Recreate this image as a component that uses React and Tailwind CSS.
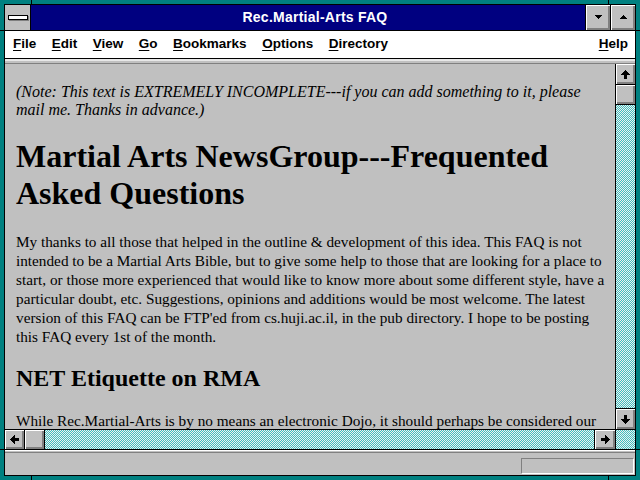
const raised = 'bg-[#c0c0c0] shadow-[inset_1px_1px_0_#fff,inset_-2px_-2px_0_#808080]'

// 1px checkerboard used by the Win 3.1 scrollbar tracks
function Dither({ id, className = '' }) {
  return (
    <div className={`overflow-hidden ${className}`}>
      <svg width="100%" height="100%" shapeRendering="crispEdges">
        <defs>
          <pattern id={id} width="2" height="2" patternUnits="userSpaceOnUse">
            <rect width="2" height="2" fill="#f0f0f0" />
            <rect width="1" height="1" fill="#3fbfbf" />
            <rect x="1" y="1" width="1" height="1" fill="#3fbfbf" />
          </pattern>
        </defs>
        <rect width="100%" height="100%" fill={`url(#${id})`} />
      </svg>
    </div>
  )
}

function Arrow({ dir }) {
  const rot = { up: 0, right: 90, down: 180, left: 270 }[dir]
  return (
    <svg width="11" height="11" viewBox="0 0 11 11" shapeRendering="crispEdges" style={{ transform: `rotate(${rot}deg)` }}>
      <polygon points="5.5,1 10,6 7,6 7,10 4,10 4,6 1,6" fill="#000" />
    </svg>
  )
}

function Tri({ up }) {
  return (
    <svg width="8" height="5" viewBox="0 0 8 5" shapeRendering="crispEdges">
      <polygon points={up ? '4,0 8,4 0,4' : '0,0 8,0 4,4'} fill="#000" />
    </svg>
  )
}

function MenuItem({ first, rest }) {
  return (
    <span>
      <span className="underline underline-offset-2">{first}</span>
      {rest}
    </span>
  )
}

const para = [
  'My thanks to all those that helped in the outline & development of this idea. This FAQ is not',
  'intended to be a Martial Arts Bible, but to give some help to those that are looking for a place to',
  'start, or those more experienced that would like to know more about some different style, have a',
  'particular doubt, etc. Suggestions, opinions and additions would be most welcome. The latest',
  "version of this FAQ can be FTP'ed from cs.huji.ac.il, in the pub directory. I hope to be posting",
  'this FAQ every 1st of the month.',
]

export default function App() {
  return (
    <div className="relative w-[640px] h-[480px] bg-[#008080] p-[4px] font-['Liberation_Sans',Arial,sans-serif]">
      {/* frame corner ticks */}
      <div className="absolute left-[31px] top-0 w-px h-[4px] bg-black" />
      <div className="absolute left-[608px] top-0 w-px h-[4px] bg-black" />
      <div className="absolute left-[31px] bottom-0 w-px h-[4px] bg-black" />
      <div className="absolute left-[608px] bottom-0 w-px h-[4px] bg-black" />
      <div className="absolute left-0 top-[30px] w-[4px] h-px bg-black" />
      <div className="absolute right-0 top-[30px] w-[4px] h-px bg-black" />
      <div className="absolute left-0 top-[449px] w-[4px] h-px bg-black" />
      <div className="absolute right-0 top-[449px] w-[4px] h-px bg-black" />

      <div className="h-full border border-black flex flex-col bg-[#c0c0c0]">
        {/* title bar */}
        <div className="h-[26px] flex border-b border-black shrink-0">
          <div className="w-[26px] border-r border-black bg-[#c0c0c0] flex items-center justify-center">
            <div className="w-[20px] h-[5px] border border-black bg-white shadow-[1px_1px_0_#808080]" />
          </div>
          <div className="flex-1 bg-[#000080] text-white font-bold text-[14px] tracking-[0.25px] flex items-center justify-center pl-[14px]">
            Rec.Martial-Arts FAQ
          </div>
          <div className={`w-[25px] border-l border-black flex items-center justify-center ${raised}`}>
            <Tri />
          </div>
          <div className={`w-[25px] border-l border-black flex items-center justify-center ${raised}`}>
            <Tri up />
          </div>
        </div>

        {/* menu bar */}
        <div className="h-[28px] bg-white border-b border-black flex items-center pl-[8px] pr-[7px] text-[13.5px] font-bold text-black shrink-0">
          <div className="flex gap-[15.5px]">
            <MenuItem first="F" rest="ile" />
            <MenuItem first="E" rest="dit" />
            <MenuItem first="V" rest="iew" />
            <MenuItem first="G" rest="o" />
            <MenuItem first="B" rest="ookmarks" />
            <MenuItem first="O" rest="ptions" />
            <MenuItem first="D" rest="irectory" />
          </div>
          <div className="ml-auto">
            <MenuItem first="H" rest="elp" />
          </div>
        </div>

        {/* toolbar strip */}
        <div className="h-[5px] shrink-0 border-t-2 border-t-[#e8e8e8] border-b border-b-[#808080]" />

        {/* document + vertical scrollbar */}
        <div className="flex-1 flex min-h-0">
          <div className="flex-1 overflow-hidden pl-[11px] pt-[19px] text-black font-['Liberation_Serif','Times_New_Roman',serif] whitespace-nowrap">
            <p className="italic text-[16px] leading-[18px]">
              (Note: This text is EXTREMELY INCOMPLETE---if you can add something to it, please
              <br />
              mail me. Thanks in advance.)
            </p>
            <h1 className="mt-[19px] text-[32px] leading-[37px] font-bold">
              Martial Arts NewsGroup---Frequented
              <br />
              Asked Questions
            </h1>
            <p className="mt-[20px] text-[15.25px] leading-[19px]">
              {para.map((l) => (
                <span key={l} className="block">{l}</span>
              ))}
            </p>
            <h2 className="mt-[18px] text-[24px] leading-[28px] font-bold">NET Etiquette on RMA</h2>
            <p className="mt-[19px] text-[15.25px] leading-[19px]">
              While Rec.Martial-Arts is by no means an electronic Dojo, it should perhaps be considered our
            </p>
          </div>
          <div className="w-[20px] border-l border-black flex flex-col">
            <div className={`h-[21px] border-b border-black flex items-center justify-center ${raised}`}>
              <Arrow dir="up" />
            </div>
            <div className={`h-[20px] border-b border-black ${raised}`} />
            <Dither id="dv" className="flex-1" />
            <div className={`h-[21px] border-t border-black flex items-center justify-center ${raised}`}>
              <Arrow dir="down" />
            </div>
          </div>
        </div>

        {/* horizontal scrollbar */}
        <div className="h-[20px] border-t border-black flex shrink-0">
          <div className={`w-[20px] border-r border-black flex items-center justify-center ${raised}`}>
            <Arrow dir="left" />
          </div>
          <div className={`w-[20px] border-r border-black ${raised}`} />
          <Dither id="dh" className="flex-1" />
          <div className={`w-[21px] border-l border-black flex items-center justify-center ${raised}`}>
            <Arrow dir="right" />
          </div>
          <Dither id="dc" className="w-[20px] border-l border-black" />
        </div>

        {/* status bar */}
        <div className="h-[26px] shrink-0 border-t border-black flex flex-col">
          <div className="h-[3px] border-t border-t-white border-b border-b-[#808080]" />
          <div className="flex-1 flex justify-end items-start pt-[5px] pr-px">
            <div className="w-[113px] h-[16px] border border-[#808080] border-r-white border-b-white" />
          </div>
        </div>
      </div>
    </div>
  )
}
